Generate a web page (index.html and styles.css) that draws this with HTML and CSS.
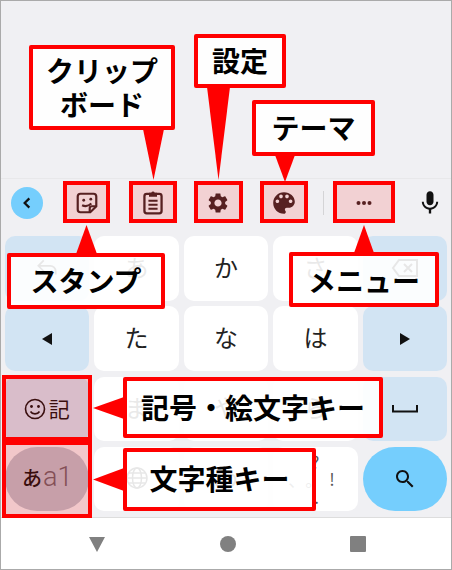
FILE: index.html
```html
<!DOCTYPE html>
<html lang="ja">
<head>
<meta charset="utf-8">
<title>キーボード</title>
<link rel="stylesheet" href="styles.css">
</head>
<body>
<div class="frame">
  <div class="app-space"></div>

  <div class="toolbar">
    <div class="back"><svg viewBox="0 0 24 24" width="16" height="16"><path d="M15.500 5l-7 7 7 7" fill="none" stroke="#111" stroke-width="3.400"/></svg></div>
    <svg class="tool tool-stamp" viewBox="1 1 22 22"><path d="M6 3.500h12a2.500 2.500 0 0 1 2.500 2.500v9l-5.500 5.500H6A2.500 2.500 0 0 1 3.500 18V6A2.500 2.500 0 0 1 6 3.500z" fill="none" stroke="#3e2526" stroke-width="2"/><path d="M14.500 20.500V17a2 2 0 0 1 2-2h4" fill="none" stroke="#3e2526" stroke-width="2"/><circle cx="9" cy="9.500" r="1.300" fill="#3e2526"/><circle cx="15.500" cy="8.500" r="1.300" fill="#3e2526"/><path d="M7.500 14c3 1.500 6 .8 8.500-1.500" fill="none" stroke="#3e2526" stroke-width="2"/></svg>
    <svg class="tool" viewBox="1.500 2 21 21"><rect x="4.500" y="4.500" width="15" height="17" rx="2" fill="none" stroke="#3e2526" stroke-width="2"/><path d="M8.500 3.500h2a1.600 1.600 0 0 1 3 0h2v3.500h-7z" fill="#3e2526"/><path d="M8 10.500h8M8 14h8M8 17.500h8" stroke="#3e2526" stroke-width="1.800"/></svg>
    <svg class="tool" viewBox="0 0 24 24"><path fill="#3e2526" d="M19.140 12.940c.04-.3.06-.61.06-.94 0-.32-.02-.64-.07-.94l2.030-1.580c.18-.14.23-.41.12-.61l-1.920-3.320c-.12-.22-.37-.29-.59-.22l-2.390.96c-.5-.38-1.030-.7-1.620-.94l-.36-2.540c-.04-.24-.24-.41-.48-.41h-3.840c-.24 0-.43.17-.47.41l-.36 2.540c-.59.24-1.130.57-1.620.94l-2.390-.96c-.22-.08-.47 0-.59.22L2.740 8.870c-.12.21-.08.47.12.61l2.030 1.580c-.05.3-.09.63-.09.94s.02.64.07.94l-2.030 1.580c-.18.14-.23.41-.12.61l1.920 3.320c.12.22.37.29.59.22l2.390-.96c.5.38 1.030.7 1.620.94l.36 2.540c.05.24.24.41.48.41h3.840c.24 0 .44-.17.47-.41l.36-2.540c.59-.24 1.130-.56 1.620-.94l2.390.96c.22.08.47 0 .59-.22l1.920-3.320c.12-.22.07-.47-.12-.61l-2.010-1.580zM12 15.600c-1.980 0-3.600-1.620-3.600-3.600s1.620-3.600 3.600-3.600 3.600 1.620 3.600 3.600-1.620 3.600-3.600 3.600z"/></svg>
    <svg class="tool" viewBox="2 2 20 20"><path fill="#3e2526" d="M12 3c-4.970 0-9 4.030-9 9s4.030 9 9 9c.83 0 1.500-.67 1.500-1.500 0-.39-.15-.74-.39-1.010-.23-.26-.38-.61-.38-.99 0-.83.67-1.500 1.500-1.500H16c2.760 0 5-2.240 5-5 0-4.420-4.030-8-9-8zm-5.500 9c-.83 0-1.500-.67-1.500-1.500S5.670 9 6.500 9 8 9.670 8 10.500 7.330 12 6.500 12zm3-4C8.670 8 8 7.330 8 6.500S8.670 5 9.500 5s1.500.67 1.500 1.500S10.330 8 9.500 8zm5 0c-.83 0-1.500-.67-1.500-1.500S13.670 5 14.500 5s1.500.67 1.500 1.500S15.330 8 14.500 8zm3 4c-.83 0-1.500-.67-1.500-1.500S16.670 9 17.500 9s1.500.67 1.500 1.500-.67 1.500-1.500 1.500z"/></svg>
    <span class="divider"></span>
    <svg class="tool" viewBox="0 0 24 24"><circle cx="6.500" cy="12" r="2" fill="#3e2526"/><circle cx="12" cy="12" r="2" fill="#3e2526"/><circle cx="17.500" cy="12" r="2" fill="#3e2526"/></svg>
    <svg class="tool tool-mic" viewBox="0 0 24 24"><path fill="#111" d="M12 14c1.660 0 3-1.340 3-3V5c0-1.660-1.340-3-3-3S9 3.340 9 5v6c0 1.660 1.340 3 3 3zm5.300-3c0 3-2.540 5.100-5.300 5.100S6.700 14 6.700 11H5c0 3.410 2.720 6.230 6 6.720V21h2v-3.280c3.280-.48 6-3.300 6-6.720h-1.700z"/></svg>
  </div>

  <div class="keys">
    <div class="key fn"><svg viewBox="0 0 24 24" width="26" height="26"><path d="M9 5L4 10l5 5M4 10h11a5 5 0 0 1 5 5v3" fill="none" stroke="#111" stroke-width="1.600"/></svg></div>
    <div class="key">あ</div>
    <div class="key">か</div>
    <div class="key">さ</div>
    <div class="key fn"><svg viewBox="0 0 28 24" width="28" height="24"><path d="M8 4h18v16H8l-6-8z" fill="none" stroke="#111" stroke-width="2"/><path d="M13 8l8 8M21 8l-8 8" stroke="#111" stroke-width="2"/></svg></div>

    <div class="key fn"><svg viewBox="0 0 10 12" width="10" height="12"><path d="M10 0v12L0 6z" fill="#111"/></svg></div>
    <div class="key">た</div>
    <div class="key">な</div>
    <div class="key">は</div>
    <div class="key fn"><svg viewBox="0 0 10 12" width="10" height="12"><path d="M0 0v12l10-6z" fill="#111"/></svg></div>

    <div class="key fn symbol"><svg viewBox="0 0 22 22" width="22" height="22"><circle cx="11" cy="11" r="9.500" fill="none" stroke="#111" stroke-width="1.600"/><circle cx="7.500" cy="8.500" r="1.400" fill="#111"/><circle cx="14.500" cy="8.500" r="1.400" fill="#111"/><path d="M6.500 13.500c2 3.200 7 3.200 9 0" fill="none" stroke="#111" stroke-width="1.600"/></svg><span>記</span></div>
    <div class="key">ま</div>
    <div class="key">や</div>
    <div class="key">ら</div>
    <div class="key fn"><svg viewBox="0 0 26 8" width="26" height="8"><path d="M1 0v6.500h24V0" fill="none" stroke="#111" stroke-width="2"/></svg></div>

    <div class="key kind"><b>あ</b><span>a1</span></div>
    <div class="key"><svg viewBox="0 0 24 24" width="24" height="24"><circle cx="12" cy="12" r="10" fill="none" stroke="#111" stroke-width="1.500"/><ellipse cx="12" cy="12" rx="4.500" ry="10" fill="none" stroke="#111" stroke-width="1.500"/><path d="M2 12h20M3.500 7h17M3.500 17h17" stroke="#111" stroke-width="1.500"/></svg></div>
    <div class="key">わ</div>
    <div class="key punct"><i class="p-top">?</i><i class="p-mid">、</i><i class="p-box">。</i><i class="p-right">!</i><i class="p-bottom">.</i></div>
    <div class="key search"><svg viewBox="0 0 24 24" width="24" height="24"><path fill="#111" d="M15.500 14h-.79l-.28-.27C15.410 12.590 16 11.110 16 9.500 16 5.910 13.090 3 9.500 3S3 5.910 3 9.500 5.910 16 9.500 16c1.610 0 3.090-.59 4.230-1.570l.27.28v.79l5 4.990L20.490 19l-4.990-5zm-6 0C7.010 14 5 11.990 5 9.500S7.010 5 9.500 5 14 7.010 14 9.500 11.990 14 9.500 14z"/></svg></div>
  </div>

  <div class="nav">
    <span class="nav-back"></span>
    <span class="nav-home"></span>
    <span class="nav-recent"></span>
  </div>

  <span class="mark m-stamp"></span>
  <span class="mark m-clip"></span>
  <span class="mark m-gear"></span>
  <span class="mark m-theme"></span>
  <span class="mark m-menu"></span>
  <span class="mark m-symbol"></span>
  <span class="mark m-kind"></span>

  <svg class="arrows" viewBox="0 0 452 570" width="452" height="570">
    <polygon points="143,129 164,129 153.500,180"/>
    <polygon points="207,87 230,87 218.500,180"/>
    <polygon points="275,155 295,155 285,182"/>
    <polygon points="76,254 97,254 86.500,225"/>
    <polygon points="354,253 374,253 364,225"/>
    <polygon points="124,397 124,419 93,408"/>
    <polygon points="124,468 124,491 93,479.500"/>
  </svg>

  <div class="callout c-clip">クリップ<br>ボード</div>
  <div class="callout c-gear">設定</div>
  <div class="callout c-theme">テーマ</div>
  <div class="callout c-stamp">スタンプ</div>
  <div class="callout c-menu">メニュー</div>
  <div class="callout c-symbol">記号・絵文字キー</div>
  <div class="callout c-kind">文字種キー</div>
</div>
</body>
</html>
```
FILE: styles.css
```css
* { box-sizing: border-box; }

html, body { margin: 0; padding: 0; }

body {
  font-family: "Noto Sans CJK JP", "Noto Sans", sans-serif;
  background: #fff;
}

.frame {
  position: relative;
  width: 452px;
  height: 570px;
  overflow: hidden;
  display: flex;
  flex-direction: column;
  background: #f0f0f3;
}

.frame::after {
  content: "";
  position: absolute;
  inset: 0;
  border: 1px solid #aaa;
  pointer-events: none;
}

.app-space {
  height: 179px;
  flex: none;
  border-bottom: 1px solid #e8e8ea;
}

.toolbar {
  height: 56px;
  flex: none;
  display: flex;
  align-items: center;
  padding: 0 0 8px 11px;
}

.back {
  width: 32px;
  height: 32px;
  border-radius: 50%;
  background: #75cefd;
  display: flex;
  align-items: center;
  justify-content: center;
}

.tool {
  width: 24px;
  height: 24px;
  flex: none;
  margin-left: 41.500px;
}

.tool-stamp { margin-left: 32px; }

.divider {
  width: 1px;
  height: 24px;
  background: #d4d4d6;
  margin: 0 27.500px;
}

.divider + .tool { margin-left: 0; }

.tool-mic {
  width: 28px;
  height: 28px;
  margin-left: 40px;
}

.keys {
  display: grid;
  grid-template-columns: repeat(5, 1fr);
  grid-auto-rows: 64.500px;
  gap: 5.800px 5px;
  padding: 1px 5px 6px;
  flex: none;
}

.key {
  position: relative;
  background: #fff;
  border-radius: 10px;
  display: flex;
  align-items: center;
  justify-content: center;
  font-size: 24px;
  line-height: 1;
  padding-bottom: 3px;
  color: #222;
}

.fn, .search { padding-bottom: 0; }

.fn { background: #d2e4f3; }

.symbol { gap: 3px; padding-right: 1px; }

.symbol span { font-size: 21px; color: #111; }

.kind {
  background: #bcc0cc;
  border-radius: 32px;
}

.kind b { font-size: 20px; font-weight: 500; color: #111; }

.kind span {
  font-size: 27px;
  font-family: "Roboto", sans-serif;
  font-weight: 300;
  color: #6a5f68;
  margin-left: 1px;
}

.search {
  background: #75cefd;
  border-radius: 32px;
}

.punct i {
  position: absolute;
  font-style: normal;
  font-size: 17px;
  line-height: 1;
  color: #555;
}

.p-top { left: 38px; top: 6px; }
.p-mid { left: 15px; top: 24px; }
.p-box { left: 32px; top: 24px; }
.p-right { left: 56px; top: 23px; }
.p-bottom { left: 41px; top: 41px; }

.nav {
  flex: 1;
  background: #fff;
  border-top: 1px solid #ddd;
  position: relative;
  display: flex;
  align-items: center;
  padding: 0 0 0 89px;
}

.nav-back {
  width: 0;
  height: 0;
  border-left: 8.500px solid transparent;
  border-right: 8.500px solid transparent;
  border-top: 15px solid #808080;
}

.nav-home {
  width: 16px;
  height: 16px;
  border-radius: 50%;
  background: #808080;
  margin-left: 115px;
}

.nav-recent {
  width: 16px;
  height: 16px;
  border-radius: 1px;
  background: #808080;
  margin-left: 114px;
}

.mark {
  position: absolute;
  border: 4px solid #f00;
  background: rgba(255, 0, 0, 0.13);
}

.m-stamp { left: 63px; top: 181px; width: 47px; height: 42px; }
.m-clip { left: 129px; top: 181px; width: 48px; height: 42px; }
.m-gear { left: 194px; top: 181px; width: 49px; height: 42px; }
.m-theme { left: 260px; top: 181px; width: 48px; height: 42px; }
.m-menu { left: 333px; top: 181px; width: 62px; height: 42px; }
.m-symbol { left: 2px; top: 375px; width: 90px; height: 66px; background: rgba(255, 0, 0, 0.17); }
.m-kind { left: 2px; top: 441px; width: 90px; height: 77px; background: rgba(255, 0, 0, 0.17); }

.arrows {
  position: absolute;
  left: 0;
  top: 0;
  fill: #f00;
}

.callout {
  position: absolute;
  display: flex;
  align-items: center;
  justify-content: center;
  text-align: center;
  border: 4px solid #f00;
  border-radius: 2px;
  background: rgba(255, 255, 255, 0.9);
  font-size: 28px;
  font-weight: 700;
  line-height: 34px;
  color: #000;
}

.c-clip { left: 29px; top: 45px; width: 146px; height: 85px; padding-bottom: 2px; }
.c-gear { left: 194px; top: 34px; width: 92px; height: 54px; padding-bottom: 2px; }
.c-theme { left: 252px; top: 100px; width: 123px; height: 56px; padding-bottom: 2px; }
.c-stamp { left: 7px; top: 253px; width: 158px; height: 56px; padding-bottom: 3px; }
.c-menu { left: 289px; top: 252px; width: 150px; height: 55px; }
.c-symbol { left: 123px; top: 377px; width: 260px; height: 61px; padding-bottom: 2px; }
.c-kind { left: 123px; top: 448px; width: 193px; height: 63px; padding-bottom: 3px; }
```
